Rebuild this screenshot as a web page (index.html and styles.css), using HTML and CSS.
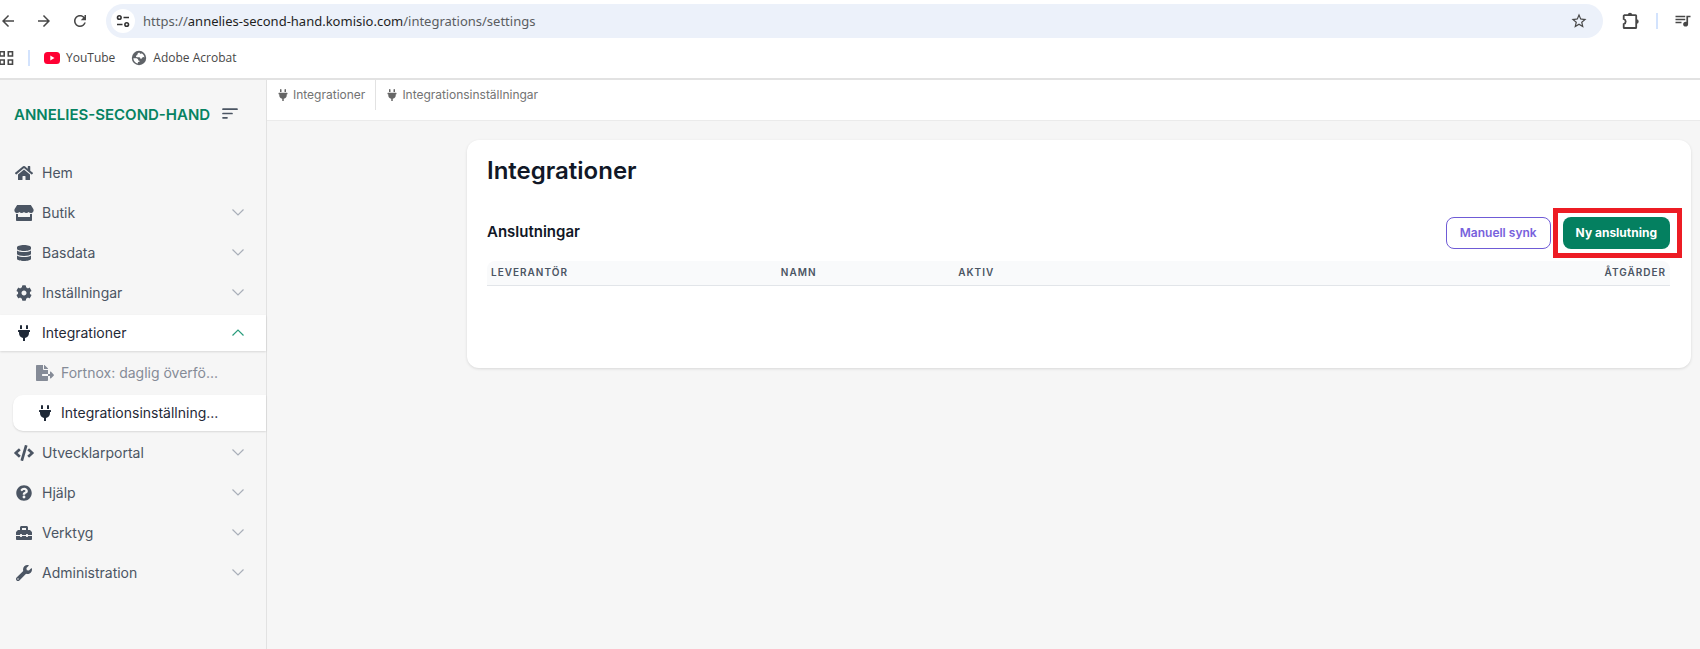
FILE: index.html
```html
<!DOCTYPE html>
<html lang="sv">
<head>
<meta charset="utf-8">
<title>Integrationer</title>
<link rel="stylesheet" href="styles.css">
</head>
<body>
<header class="browser">
  <div class="toolbar">
    <button class="tool" aria-label="Bakåt"><svg viewBox="0 0 24 24"><path d="M20 11H7.83l5.59-5.59L12 4l-8 8 8 8 1.41-1.41L7.83 13H20v-2z"/></svg></button>
    <button class="tool" aria-label="Framåt"><svg viewBox="0 0 24 24"><path d="M12 4l-1.41 1.41L16.17 11H4v2h12.17l-5.58 5.59L12 20l8-8z"/></svg></button>
    <button class="tool" aria-label="Ladda om"><svg viewBox="0 0 24 24"><path d="M17.65 6.35C16.2 4.9 14.21 4 12 4c-4.42 0-7.99 3.58-7.99 8s3.57 8 7.99 8c3.73 0 6.84-2.55 7.73-6h-2.08c-.82 2.33-3.04 4-5.65 4-3.31 0-6-2.69-6-6s2.69-6 6-6c1.66 0 3.14.69 4.22 1.78L13 11h7V4h-2v2.7z"/></svg></button>
    <div class="address">
      <button class="site-info" aria-label="Webbplatsinformation"><svg viewBox="0 0 14 14" fill="none" stroke="#333" stroke-width="1.6"><circle cx="3.3" cy="3.5" r="1.8"/><path d="M7.5 3.5H13M1 10.5h5.5"/><circle cx="10.7" cy="10.5" r="1.8"/></svg></button>
      <p class="url">https://<span class="host">annelies-second-hand.komisio.com</span>/integrations/settings</p>
      <button class="tool star" aria-label="Bokmärk"><svg viewBox="0 0 24 24"><path d="M22 9.24l-7.19-.62L12 2 9.19 8.63 2 9.24l5.46 4.73L5.82 21 12 17.27 18.18 21l-1.63-7.03L22 9.24zM12 15.4l-3.76 2.27 1-4.28-3.32-2.88 4.38-.38L12 6.1l1.71 4.04 4.38.38-3.32 2.88 1 4.28L12 15.4z"/></svg></button>
    </div>
    <div class="extras">
      <button class="tool" aria-label="Tillägg"><svg viewBox="0 0 18 18"><path d="M2 3.2h11.6q.6 0 .6.6V15.400q0 .6-.6.6H2.300q-.6 0-.6-.6V12.200q2-.6 2-2.600t-2-2.600V3.800q0-.6.6-.6z" fill="none" stroke="#474747" stroke-width="1.800"/><path d="M5.800 3a2.200 2.200 0 0 1 4.400 0zM14.500 7.300a2.200 2.200 0 0 1 0 4.400z"/></svg></button>
      <span class="divider"></span>
      <button class="tool" aria-label="Mediekontroller"><svg viewBox="0 0 24 24"><path d="M15 5H2v2h13V5zm0 4H2v2h13V9zM2 15h8v-2H2v2zM16.500 5v8.180c-.31-.11-.65-.18-1-.18-1.900 0-3.300 1.340-3.300 3.200s1.400 3.200 3.300 3.200 3.300-1.340 3.300-3.200V7H22V5h-5.500z"/></svg></button>
    </div>
  </div>
  <nav class="bookmarks" aria-label="Bokmärken">
    <button class="apps" aria-label="Appar"><svg viewBox="0 0 14 14" fill="none" stroke="#474747" stroke-width="1.6"><path d="M0 .8h4.200v4.200H0zM8.300.8h4.200v4.200H8.300zM0 9h4.200v4.200H0zM8.300 9h4.200v4.200H8.300z"/></svg></button>
    <span class="divider"></span>
    <a class="bookmark" href="#"><svg viewBox="0 0 16 16"><rect y="2" width="16" height="12" rx="3.500" fill="#f03"/><path d="M6.300 5.500v5l4.200-2.500z" fill="#fff"/></svg>YouTube</a>
    <a class="bookmark" href="#"><svg viewBox="0 0 16 16"><circle cx="8" cy="8" r="7.200" fill="#5f6368"/><path d="M8.200 2.400q-1.800.4-1.800 2.100 0 1-1.200 1.100-.9 1.700.7 1.700h2.500q1 .1 1 1.400 1.500.3 1.800-.9.300-.8 1.200-.8.900.1 1.200.6Q13 4.600 10.800 3.200q-.8 1-1.600.5zM2.300 8.200l3.500.1q1.800.8 1.500 2.200l1.200.2v1l-1.600.3.1 1.600Q2.800 12.600 2.300 8.200z" fill="#fff"/></svg>Adobe Acrobat</a>
  </nav>
</header>

<svg class="sprite" aria-hidden="true">
  <symbol id="plug" viewBox="0 0 384 512"><path d="M320,32a32,32,0,0,0-64,0v96h64Zm48,128H16A16,16,0,0,0,0,176v32a16,16,0,0,0,16,16H32v32A160.070,160.070,0,0,0,160,412.800V512h64V412.800A160.070,160.070,0,0,0,352,256V224h16a16,16,0,0,0,16-16V176A16,16,0,0,0,368,160ZM128,32a32,32,0,0,0-64,0v96h64Z"/></symbol>
  <symbol id="chevron" viewBox="0 0 12 7"><path d="M.5.500L6 6 11.500.500" fill="none" stroke="currentColor" stroke-width="1.200"/></symbol>
</svg>

<div class="app">
  <aside class="sidebar">
    <div class="brand">
      <a class="brand-name" href="#">ANNELIES-SECOND-HAND</a>
      <button class="collapse" aria-label="Fäll ihop menyn"><svg viewBox="0 0 16 11" fill="none" stroke="#4b5563" stroke-width="1.700" stroke-linecap="round"><path d="M1 1.200h14M1 5.500h9M1 9.800h4"/></svg></button>
    </div>
    <nav class="menu" aria-label="Huvudmeny">
      <a class="item" href="#"><svg class="icon" viewBox="0 0 576 512"><path d="M280.370 148.260L96 300.110V464a16 16 0 0 0 16 16l112.060-.29a16 16 0 0 0 15.920-16V368a16 16 0 0 1 16-16h64a16 16 0 0 1 16 16v95.640a16 16 0 0 0 16 16.050L464 480a16 16 0 0 0 16-16V300L295.670 148.260a12.190 12.190 0 0 0-15.300 0zM571.600 251.470L488 182.560V44.050a12 12 0 0 0-12-12h-56a12 12 0 0 0-12 12v72.610L318.470 43a48 48 0 0 0-61 0L4.340 251.470a12 12 0 0 0-1.600 16.900l25.500 31A12 12 0 0 0 45.150 301l235.220-193.740a12.190 12.190 0 0 1 15.300 0L530.900 301a12 12 0 0 0 16.900-1.600l25.500-31a12 12 0 0 0-1.700-16.930z"/></svg><span class="label">Hem</span></a>
      <a class="item" href="#"><svg class="icon" viewBox="0 0 616 512"><path d="M602 118.600L537.100 15C531.300 5.700 521 0 510 0H106C95 0 84.700 5.700 78.900 15L14 118.600c-33.500 53.500-3.800 127.900 58.800 136.400 4.500.6 9.100.9 13.700.9 29.600 0 55.800-13 73.800-33.100 18 20.100 44.300 33.100 73.800 33.100 29.600 0 55.800-13 73.800-33.100 18 20.100 44.300 33.100 73.800 33.100 29.600 0 55.800-13 73.800-33.100 18.100 20.100 44.300 33.100 73.800 33.100 4.700 0 9.200-.3 13.700-.9 62.800-8.400 92.600-82.800 59-136.400zM529.500 288c-10 0-19.900-1.500-29.500-3.800V384H116v-99.800c-9.600 2.200-19.500 3.800-29.500 3.800-6 0-12.100-.4-18-1.200-5.600-.8-11.100-2.100-16.400-3.600V480c0 17.700 14.300 32 32 32h448c17.700 0 32-14.300 32-32V283.200c-5.400 1.600-10.800 2.900-16.400 3.600-6.100.8-12.100 1.200-18.200 1.200z"/></svg><span class="label">Butik</span><svg class="chevron"><use href="#chevron"/></svg></a>
      <a class="item" href="#"><svg class="icon" viewBox="0 0 448 512"><path d="M448 73.143v45.714C448 159.143 347.667 192 224 192S0 159.143 0 118.857V73.143C0 32.857 100.333 0 224 0s224 32.857 224 73.143zM448 176v102.857C448 319.143 347.667 352 224 352S0 319.143 0 278.857V176c48.125 33.143 136.208 48.572 224 48.572S399.874 209.143 448 176zm0 160v102.857C448 479.143 347.667 512 224 512S0 479.143 0 438.857V336c48.125 33.143 136.208 48.572 224 48.572S399.874 369.143 448 336z"/></svg><span class="label">Basdata</span><svg class="chevron"><use href="#chevron"/></svg></a>
      <a class="item" href="#"><svg class="icon" viewBox="0 0 512 512"><path d="M487.400 315.700l-42.600-24.600c4.300-23.200 4.300-47 0-70.200l42.600-24.600c4.900-2.800 7.100-8.600 5.500-14-11.100-35.600-30-67.800-54.700-94.600-3.800-4.100-10-5.100-14.800-2.300L380.800 110c-17.900-15.400-38.500-27.300-60.800-35.100V25.800c0-5.600-3.900-10.500-9.400-11.700-36.700-8.200-74.300-7.800-109.200 0-5.500 1.200-9.400 6.100-9.400 11.700V75c-22.200 7.900-42.800 19.800-60.800 35.100L88.700 85.500c-4.900-2.800-11-1.900-14.800 2.300-24.700 26.700-43.600 58.900-54.700 94.600-1.700 5.400.6 11.200 5.500 14L67.300 221c-4.300 23.200-4.300 47 0 70.200l-42.600 24.600c-4.900 2.800-7.100 8.600-5.500 14 11.100 35.600 30 67.800 54.700 94.600 3.800 4.100 10 5.100 14.800 2.300l42.600-24.600c17.900 15.400 38.500 27.300 60.800 35.100v49.200c0 5.600 3.900 10.500 9.400 11.700 36.700 8.200 74.300 7.800 109.200 0 5.500-1.200 9.400-6.100 9.400-11.700v-49.200c22.200-7.900 42.800-19.800 60.800-35.100l42.600 24.600c4.900 2.800 11 1.900 14.800-2.300 24.700-26.700 43.600-58.900 54.700-94.600 1.500-5.500-.7-11.300-5.600-14.100zM256 336c-44.100 0-80-35.900-80-80s35.900-80 80-80 80 35.900 80 80-35.900 80-80 80z"/></svg><span class="label">Inställningar</span><svg class="chevron"><use href="#chevron"/></svg></a>
      <a class="item active" href="#"><svg class="icon"><use href="#plug"/></svg><span class="label">Integrationer</span><svg class="chevron open"><use href="#chevron"/></svg></a>
      <div class="submenu">
        <a class="item sub" href="#"><svg class="icon" viewBox="0 0 576 512"><path d="M384 121.900c0-6.300-2.500-12.400-7-16.900L279.100 7c-4.500-4.500-10.600-7-17-7H256v128h128zM571 308l-95.700-96.400c-10.100-10.100-27.400-3-27.400 11.300V288h-64v64h64v65.200c0 14.300 17.300 21.400 27.400 11.300L571 332c6.600-6.600 6.600-17.400 0-24zm-379 28v-32c0-8.800 7.200-16 16-16h176V160H248c-13.200 0-24-10.800-24-24V0H24C10.700 0 0 10.700 0 24v464c0 13.300 10.700 24 24 24h336c13.300 0 24-10.700 24-24V352H208c-8.800 0-16-7.200-16-16z"/></svg><span class="label">Fortnox: daglig överfö...</span></a>
        <a class="item sub active" href="#" aria-current="page"><svg class="icon"><use href="#plug"/></svg><span class="label">Integrationsinställning...</span></a>
      </div>
      <a class="item" href="#"><svg class="icon" viewBox="0 0 640 512"><path d="M278.900 511.500l-61-17.700c-6.400-1.800-10-8.500-8.200-14.900L346.200 8.700c1.800-6.400 8.500-10 14.900-8.200l61 17.700c6.400 1.800 10 8.500 8.200 14.900L293.800 503.300c-1.900 6.400-8.500 10.100-14.900 8.200zm-114-112.200l43.500-46.400c4.600-4.900 4.300-12.700-.8-17.200L117 256l90.600-79.700c5.100-4.500 5.500-12.300.8-17.200l-43.500-46.400c-4.500-4.800-12.100-5.100-17-.5L3.800 247.200c-5.100 4.700-5.100 12.800 0 17.500l144.100 135.100c4.900 4.600 12.500 4.400 17-.5zm327.200.6l144.100-135.100c5.100-4.700 5.100-12.800 0-17.500L492.100 112.100c-4.800-4.500-12.400-4.300-17 .5L431.600 159c-4.600 4.900-4.300 12.700.8 17.200L523 256l-90.600 79.700c-5.100 4.500-5.500 12.300-.8 17.200l43.500 46.400c4.500 4.900 12.100 5.100 17 .6z"/></svg><span class="label">Utvecklarportal</span><svg class="chevron"><use href="#chevron"/></svg></a>
      <a class="item" href="#"><svg class="icon" viewBox="0 0 512 512"><path d="M504 256c0 136.997-111.043 248-248 248S8 392.997 8 256C8 119.083 119.043 8 256 8s248 111.083 248 248zM262.655 90c-54.497 0-89.255 22.957-116.549 63.758-3.536 5.286-2.353 12.415 2.715 16.258l34.699 26.310c5.205 3.947 12.621 3.008 16.665-2.122 17.864-22.658 30.113-35.797 57.303-35.797 20.429 0 45.698 13.148 45.698 32.958 0 14.976-12.363 22.667-32.534 33.976C247.128 238.528 216 254.941 216 296v4c0 6.627 5.373 12 12 12h56c6.627 0 12-5.373 12-12v-1.333c0-28.462 83.186-29.647 83.186-106.667 0-58.002-60.165-102-116.531-102zM256 338c-25.365 0-46 20.635-46 46 0 25.364 20.635 46 46 46s46-20.636 46-46c0-25.365-20.635-46-46-46z"/></svg><span class="label">Hjälp</span><svg class="chevron"><use href="#chevron"/></svg></a>
      <a class="item" href="#"><svg class="icon" viewBox="0 0 512 512"><path d="M502.630 214.630l-45.250-45.250c-6-6-14.140-9.370-22.630-9.370H384V80c0-26.510-21.490-48-48-48H176c-26.510 0-48 21.490-48 48v80H77.250c-8.490 0-16.620 3.370-22.630 9.370L9.370 214.630c-6 6-9.370 14.140-9.370 22.630V320h128v-16c0-8.840 7.160-16 16-16h32c8.840 0 16 7.160 16 16v16h128v-16c0-8.840 7.160-16 16-16h32c8.840 0 16 7.160 16 16v16h128v-82.750c0-8.480-3.370-16.620-9.370-22.620zM320 160H192V96h128v64zm64 208c0 8.840-7.160 16-16 16h-32c-8.840 0-16-7.160-16-16v-16H192v16c0 8.840-7.160 16-16 16h-32c-8.840 0-16-7.160-16-16v-16H0v96c0 17.670 14.330 32 32 32h448c17.670 0 32-14.330 32-32v-96H384v16z"/></svg><span class="label">Verktyg</span><svg class="chevron"><use href="#chevron"/></svg></a>
      <a class="item" href="#"><svg class="icon" viewBox="0 0 512 512"><path d="M507.730 109.100c-2.240-9.030-13.540-12.090-20.120-5.510l-74.360 74.360-67.880-11.310-11.310-67.880 74.360-74.360c6.620-6.620 3.430-17.900-5.660-20.160-47.380-11.740-99.550.91-136.580 37.930-39.640 39.640-50.550 97.100-34.050 147.200L18.740 402.760c-24.990 24.990-24.990 65.510 0 90.500 24.990 24.990 65.510 24.990 90.500 0l213.210-213.210c50.120 16.710 107.470 5.680 147.370-34.220 37.070-37.070 49.700-89.320 37.910-136.730zM64 472c-13.250 0-24-10.750-24-24 0-13.260 10.750-24 24-24s24 10.740 24 24c0 13.250-10.750 24-24 24z"/></svg><span class="label">Administration</span><svg class="chevron"><use href="#chevron"/></svg></a>
    </nav>
  </aside>

  <div class="content">
    <nav class="crumbs" aria-label="Brödsmulor">
      <a class="crumb" href="#"><svg><use href="#plug"/></svg>Integrationer</a>
      <a class="crumb" href="#"><svg><use href="#plug"/></svg>Integrationsinställningar</a>
    </nav>
    <main class="card">
      <h1 class="title">Integrationer</h1>
      <div class="section-head">
        <h2 class="subtitle">Anslutningar</h2>
        <div class="actions">
          <button class="btn outline">Manuell synk</button>
          <div class="marked"><button class="btn primary">Ny anslutning</button></div>
        </div>
      </div>
      <table class="table">
        <thead>
          <tr><th class="col-vendor">Leverantör</th><th class="col-name">Namn</th><th>Aktiv</th><th class="col-actions">Åtgärder</th></tr>
        </thead>
        <tbody></tbody>
      </table>
    </main>
  </div>
</div>
</body>
</html>
```
FILE: styles.css
```css
* { box-sizing: border-box; }

body {
  margin: 0;
  min-height: 100vh;
  display: flex;
  flex-direction: column;
  background: #f6f6f6;
  font-family: Inter, sans-serif;
  font-size: 14px;
  font-optical-sizing: none;
  color: #111827;
}

a { color: inherit; text-decoration: none; }

button {
  padding: 0;
  border: 0;
  background: none;
  font: inherit;
  cursor: pointer;
}

.sprite { display: none; }

/* Browser bars */
.browser {
  background: #fff;
  border-bottom: 2px solid #e2e2e2;
  font-family: "Noto Sans", "Open Sans", sans-serif;
}

.toolbar {
  display: flex;
  align-items: center;
  gap: 20px;
  padding: 4px 9px 0 0;
}

.tool {
  width: 16px;
  height: 18px;
  display: flex;
  justify-content: center;
}

.tool svg {
  flex: none;
  width: 18px;
  height: 18px;
  fill: #474747;
}

.address {
  flex: 1;
  display: flex;
  align-items: center;
  height: 34px;
  margin-left: -2px;
  padding: 0 16px 0 5px;
  border-radius: 17px;
  background: #ecf1fa;
}

.site-info {
  display: grid;
  place-items: center;
  width: 24px;
  height: 24px;
  border-radius: 50%;
  background: #fff;
}

.site-info svg { width: 14px; height: 14px; }

.url {
  flex: 1;
  margin: 0 8px;
  font-size: 13px;
  color: #5a5d61;
}

.host { color: #1f1f1f; }

.extras {
  display: flex;
  align-items: center;
  gap: 17px;
}

.divider {
  width: 2px;
  height: 16px;
  background: #d3e3fd;
}

.bookmarks {
  display: flex;
  align-items: center;
  height: 40px;
  font-family: "Open Sans", "Noto Sans", sans-serif;
  font-size: 12px;
  line-height: 16px;
  color: #474747;
}

.apps { display: flex; }
.apps svg { width: 14px; height: 14px; }
.bookmarks .divider { margin: 0 14px; }

.bookmark {
  display: flex;
  align-items: center;
  gap: 6px;
  margin-right: 16px;
}

.bookmark svg { width: 16px; height: 16px; }

/* App shell */
.app {
  flex: 1;
  display: flex;
}

.sidebar {
  flex: none;
  width: 267px;
  border-right: 1px solid #e2e2e2;
  color: #4b5563;
}

.brand {
  display: flex;
  align-items: flex-start;
  gap: 12px;
  padding: 23px 14px 0;
}

.brand-name {
  font-size: 15px;
  line-height: 24px;
  font-weight: 600;
  color: #078362;
}

.collapse {
  display: flex;
  padding-top: 5px;
}

.collapse svg { width: 16px; height: 11px; }

.menu {
  display: flex;
  flex-direction: column;
  gap: 4px;
  padding-top: 28px;
}

.submenu {
  display: flex;
  flex-direction: column;
  gap: 4px;
  padding-left: 13px;
}

.item {
  display: flex;
  align-items: center;
  gap: 8px;
  height: 36px;
  padding: 0 22px 1px 14px;
}

.item.active {
  background: #fff;
  color: #1f2937;
  box-shadow: 0 1px 2px rgba(0, 0, 0, 0.12);
}

.item.sub {
  padding-left: 22px;
  gap: 6px;
  color: #858b97;
}

.item.sub.active {
  border-radius: 10px 0 0 10px;
  color: #1f2937;
}

.icon {
  flex: none;
  width: 20px;
  height: 16px;
  fill: currentColor;
}

.label {
  flex: 1;
  white-space: nowrap;
}

.chevron {
  width: 12px;
  height: 7px;
  color: #a9afb9;
}

.chevron.open {
  transform: rotate(180deg);
  color: #2a9c7c;
}

/* Content */
.content {
  flex: 1;
  min-width: 0;
}

.crumbs {
  display: flex;
  height: 41px;
  background: #fff;
  border-bottom: 1px solid #ebebeb;
  font-size: 12px;
  color: #737373;
}

.crumb {
  display: flex;
  align-items: center;
  gap: 4px;
  height: 30px;
  padding: 0 10px 1px;
}

.crumb + .crumb { border-left: 1px solid #e2e2e2; }

.crumb svg {
  width: 12px;
  height: 12px;
  fill: #666;
}

.card {
  margin: 19px 9px 0 200px;
  min-height: 228px;
  padding: 15px 21px 16px 20px;
  border-radius: 12px;
  background: #fff;
  box-shadow: 0 1px 3px rgba(0, 0, 0, 0.12);
}

.title {
  margin: 0;
  font-size: 24px;
  line-height: 32px;
  font-weight: 600;
}

.section-head {
  display: flex;
  align-items: flex-start;
  justify-content: space-between;
  margin: 30px 0 12px;
}

.subtitle {
  margin: 0;
  font-size: 15px;
  line-height: 30px;
  font-weight: 600;
}

.actions {
  display: flex;
  gap: 12px;
}

.btn {
  height: 32px;
  padding: 0 13px 1px;
  border-radius: 8px;
  font-size: 12px;
  font-weight: 600;
}

.outline {
  border: 1px solid #6f5bd6;
  color: #7862dc;
}

.primary {
  background: #048060;
  color: #fff;
  font-weight: 700;
}

/* Red frame drawn around the button it highlights */
.marked { position: relative; }

.marked::after {
  content: "";
  position: absolute;
  inset: -9px -12px -9px -10px;
  border: 5px solid #ed1c24;
  pointer-events: none;
}

.table {
  width: 100%;
  border-spacing: 0;
  table-layout: fixed;
}

.table th {
  height: 25px;
  padding: 0 4px 2px;
  border-bottom: 1px solid #e2e5e9;
  background: #f9fafb;
  font-size: 10px;
  font-weight: 600;
  letter-spacing: 1px;
  text-align: left;
  text-transform: uppercase;
  color: #4b5563;
}

.table th:first-child { border-top-left-radius: 8px; }
.table th:last-child { border-top-right-radius: 8px; }
.table .col-vendor { width: 24.5%; }
.table .col-name { width: 15%; }
.table .col-actions { text-align: right; }
```
